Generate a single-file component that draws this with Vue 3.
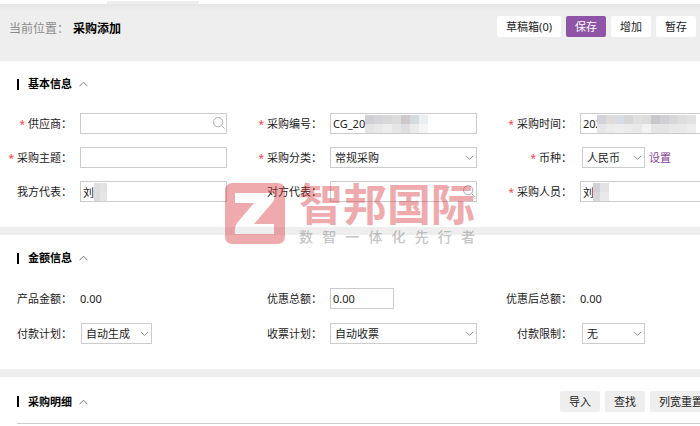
<script setup>
import { reactive } from 'vue'

const form = reactive({
  supplier: '', topic: '', ours: '刘', code: 'CG_20', category: '常规采购', theirs: '',
  time: '202', currency: '人民币', buyer: '刘', discount: '0.00',
  payPlan: '自动生成', invoicePlan: '自动收票', limit: '无',
})

const basic = [
  { key: 'supplier', label: '供应商', required: true, type: 'search' },
  { key: 'code', label: '采购编号', required: true, mask: 'code' },
  { key: 'time', label: '采购时间', required: true, mask: 'time' },
  { key: 'topic', label: '采购主题', required: true },
  { key: 'category', label: '采购分类', required: true, type: 'select' },
  { key: 'currency', label: '币种', required: true, type: 'select', size: 'small', link: '设置' },
  { key: 'ours', label: '我方代表', mask: 'ours' },
  { key: 'theirs', label: '对方代表', type: 'search' },
  { key: 'buyer', label: '采购人员', required: true, mask: 'buyer' },
]

const amount = [
  { key: 'total', label: '产品金额', type: 'text', value: '0.00' },
  { key: 'discount', label: '优惠总额', size: 'short' },
  { key: 'net', label: '优惠后总额', type: 'text', value: '0.00' },
  { key: 'payPlan', label: '付款计划', type: 'select', size: 'medium' },
  { key: 'invoicePlan', label: '收票计划', type: 'select' },
  { key: 'limit', label: '付款限制', type: 'select', size: 'small' },
]

const masks = {
  code: ['#d0d0d4', '#d4d5d8', '#d8d8d6', '#dcdcdd', '#cfc8cb', '#d5dade', '#eaf0ef',
    '#e4e4e6', '#e8e8e9', '#ededed', '#e6e6e8', '#dfdfe2', '#ebebec', '#f5f5f5'],
  time: ['#d2d2d9', '#dfdcd8', '#d8dce6', '#d6d6d9', '#e0e0e1', '#dcdedb', '#c8c7cb', '#d0d0d2', '#d8d8da', '#dededf', '#e2e2e3',
    '#e6e6e8', '#ebebec', '#eeeef0', '#eaeaeb', '#e9e9ea', '#f2f2f2', '#e5e5e6', '#e4e4e5', '#e9e9ea', '#e9e9ea', '#ededee'],
  ours: ['#dfdfe2', '#e3e3e3', '#dddddf', '#e6e6e6'],
  buyer: ['#d0d0d5', '#e3e3e4', '#d8d8dc', '#e9e9e9'],
}

const sections = [
  { title: '基本信息', fields: basic },
  { title: '金额信息', fields: amount, name: 'amount' },
]
</script>

<template>
  <div class="page">
    <div class="tabs"><span class="tab"></span></div>
    <header class="bar">
      <div class="crumb">当前位置：<strong>采购添加</strong></div>
      <div class="actions">
        <button type="button">草稿箱(0)</button>
        <button type="button" class="primary">保存</button>
        <button type="button">增加</button>
        <button type="button">暂存</button>
      </div>
    </header>

    <section v-for="s in sections" :key="s.title" class="panel" :class="s.name">
      <h2 class="title">
        {{ s.title }}
        <svg class="fold" viewBox="0 0 9 6"><path d="M.6 5.2 4.5 1.2l3.9 4" /></svg>
      </h2>
      <div class="grid">
        <div v-for="f in s.fields" :key="f.key" class="field">
          <component :is="f.type === 'text' ? 'span' : 'label'" class="label" :for="f.type === 'text' ? null : f.key">
            <i v-if="f.required" class="star">*</i>{{ f.label }}：
          </component>
          <output v-if="f.type === 'text'" class="value">{{ f.value }}</output>
          <div v-else-if="f.type === 'select'" class="control" :class="f.size">
            <select :id="f.key" v-model="form[f.key]"><option>{{ form[f.key] }}</option></select>
            <svg class="arrow" viewBox="0 0 9 6"><path d="M.8.8 4.5 4.5 8.2.8" /></svg>
          </div>
          <div v-else class="control" :class="f.size">
            <input :id="f.key" v-model="form[f.key]" type="text">
            <svg v-if="f.type === 'search'" class="lens" viewBox="0 0 12 12"><circle cx="5.2" cy="5.2" r="4.6" /><path d="m8.6 8.6 3 3" /></svg>
            <div v-if="f.mask" class="mask" :class="f.mask">
              <b v-for="(c, i) in masks[f.mask]" :key="i" :style="{ background: c }"></b>
            </div>
          </div>
          <a v-if="f.link" class="link" href="#">{{ f.link }}</a>
        </div>
      </div>
    </section>

    <section class="panel detail">
      <div class="head">
        <h2 class="title">
          采购明细
          <svg class="fold" viewBox="0 0 9 6"><path d="M.6 5.2 4.5 1.2l3.9 4" /></svg>
        </h2>
        <div class="tools">
          <button type="button">导入</button>
          <button type="button">查找</button>
          <button type="button">列宽重置</button>
        </div>
      </div>
      <div class="rule"></div>
    </section>

    <div class="watermark">
      <svg class="logo" viewBox="0 0 60 61">
        <path fill-rule="evenodd" d="M8 0H52Q60 0 60 8V53Q60 61 52 61H8Q0 61 0 53V8Q0 0 8 0ZM10 10V20H29L12 40Q9 44 10 51H49V41H29L47 20Q51 15 49 10Z" />
      </svg>
      <div class="words">
        <div class="brand">智邦国际</div>
        <div class="slogan"><span v-for="c in '数智一体化先行者'" :key="c">{{ c }}</span></div>
      </div>
    </div>
  </div>
</template>

<style>
body { background: #fff; }
</style>

<style scoped>
.page {
  position: relative;
  overflow: hidden;
  background: #eee;
  color: #222;
  font: 11px/16px "Noto Sans", "Noto Sans CJK SC", sans-serif;
}
.page * { box-sizing: border-box; }
.tabs { display: flex; height: 4px; padding: 1px 0 0 107px; background: #fff; }
.tab { width: 92px; background: #eee; }
.bar {
  display: flex;
  align-items: flex-start;
  justify-content: space-between;
  height: 57px;
  padding: 12px 4px 0 9px;
  background: linear-gradient(#e6e6e6, #eee 6px);
}
.crumb { padding-top: 5px; font-size: 12px; color: #8c8c8c; }
.crumb strong { margin-left: 4px; color: #000; }
.actions, .tools { display: flex; gap: 5px; }
button {
  height: 21px;
  padding: 0 9px;
  border: 0;
  border-radius: 2px;
  background: #fff;
  color: #222;
  font: inherit;
  white-space: nowrap;
}
button.primary { background: #8f54a5; color: #fff; }
.tools button { background: #eee; }
.panel { min-width: 750px; margin-bottom: 8px; padding: 15px 0 25px; background: #fff; }
.title {
  display: flex;
  align-items: center;
  gap: 7px;
  margin: 0 0 0 17px;
  font-size: 11px;
  line-height: 16px;
  color: #000;
}
.title::before { content: ""; width: 2px; height: 11px; margin-right: 2px; background: #000; }
svg { fill: none; stroke: #777; }
.fold { width: 9px; height: 6px; }
.grid { display: grid; grid-template-columns: repeat(3, minmax(250px, 1fr)); gap: 13px 0; padding-top: 21px; }
.amount .grid { row-gap: 14px; padding-top: 22px; }
.field { display: flex; align-items: center; height: 21px; }
.label { flex: none; width: 72px; margin-right: 8px; text-align: right; white-space: nowrap; }
.star { margin-right: 3px; color: #f44; font-size: 10px; font-style: normal; }
.control { position: relative; width: 147px; height: 21px; }
.control.short { width: 64px; }
.control.small { width: 63px; margin-left: 2px; }
.control.medium { width: 71px; margin-left: 1px; }
input, select {
  display: block;
  width: 100%;
  height: 21px;
  margin: 0;
  padding: 0 2px;
  border: 1px solid #ccc;
  border-radius: 0;
  background: #fff;
  color: #222;
  font: inherit;
  appearance: none;
}
select { padding: 0 4px; }
.arrow { position: absolute; right: 3px; top: 8px; width: 9px; height: 6px; stroke: #999; }
.lens { position: absolute; right: 2px; top: 4px; width: 12px; height: 12px; stroke: #aaa; }
.link { margin-left: 4px; color: #8a3fa0; text-decoration: none; }
.mask { position: absolute; top: 2px; display: grid; grid-auto-rows: 9px; }
.mask.code { left: 35px; grid-template-columns: repeat(7, 9px); }
.mask.time { left: 17px; grid-template-columns: repeat(11, 9px); }
.mask.ours { left: 14px; grid-template-columns: 6px 7px; }
.mask.buyer { left: 13px; grid-template-columns: 7px 9px; }
.detail { margin: 0; padding: 14px 0 2px; }
.head { display: flex; align-items: center; justify-content: space-between; padding-right: 38px; }
.rule { height: 1px; margin: 11px 0 0 17px; background: #ccc; }
.watermark {
  position: absolute;
  top: 183px;
  left: 50%;
  display: flex;
  gap: 14px;
  transform: translateX(-50%);
  opacity: .42;
  pointer-events: none;
}
.logo { width: 60px; height: 61px; fill: #d9363e; stroke: none; }
.brand { color: #d9363e; font-size: 44px; font-weight: 700; line-height: 42px; }
.slogan { display: flex; justify-content: space-between; margin-top: 4px; color: #777; font-size: 14px; font-weight: 500; line-height: 16px; }
</style>
